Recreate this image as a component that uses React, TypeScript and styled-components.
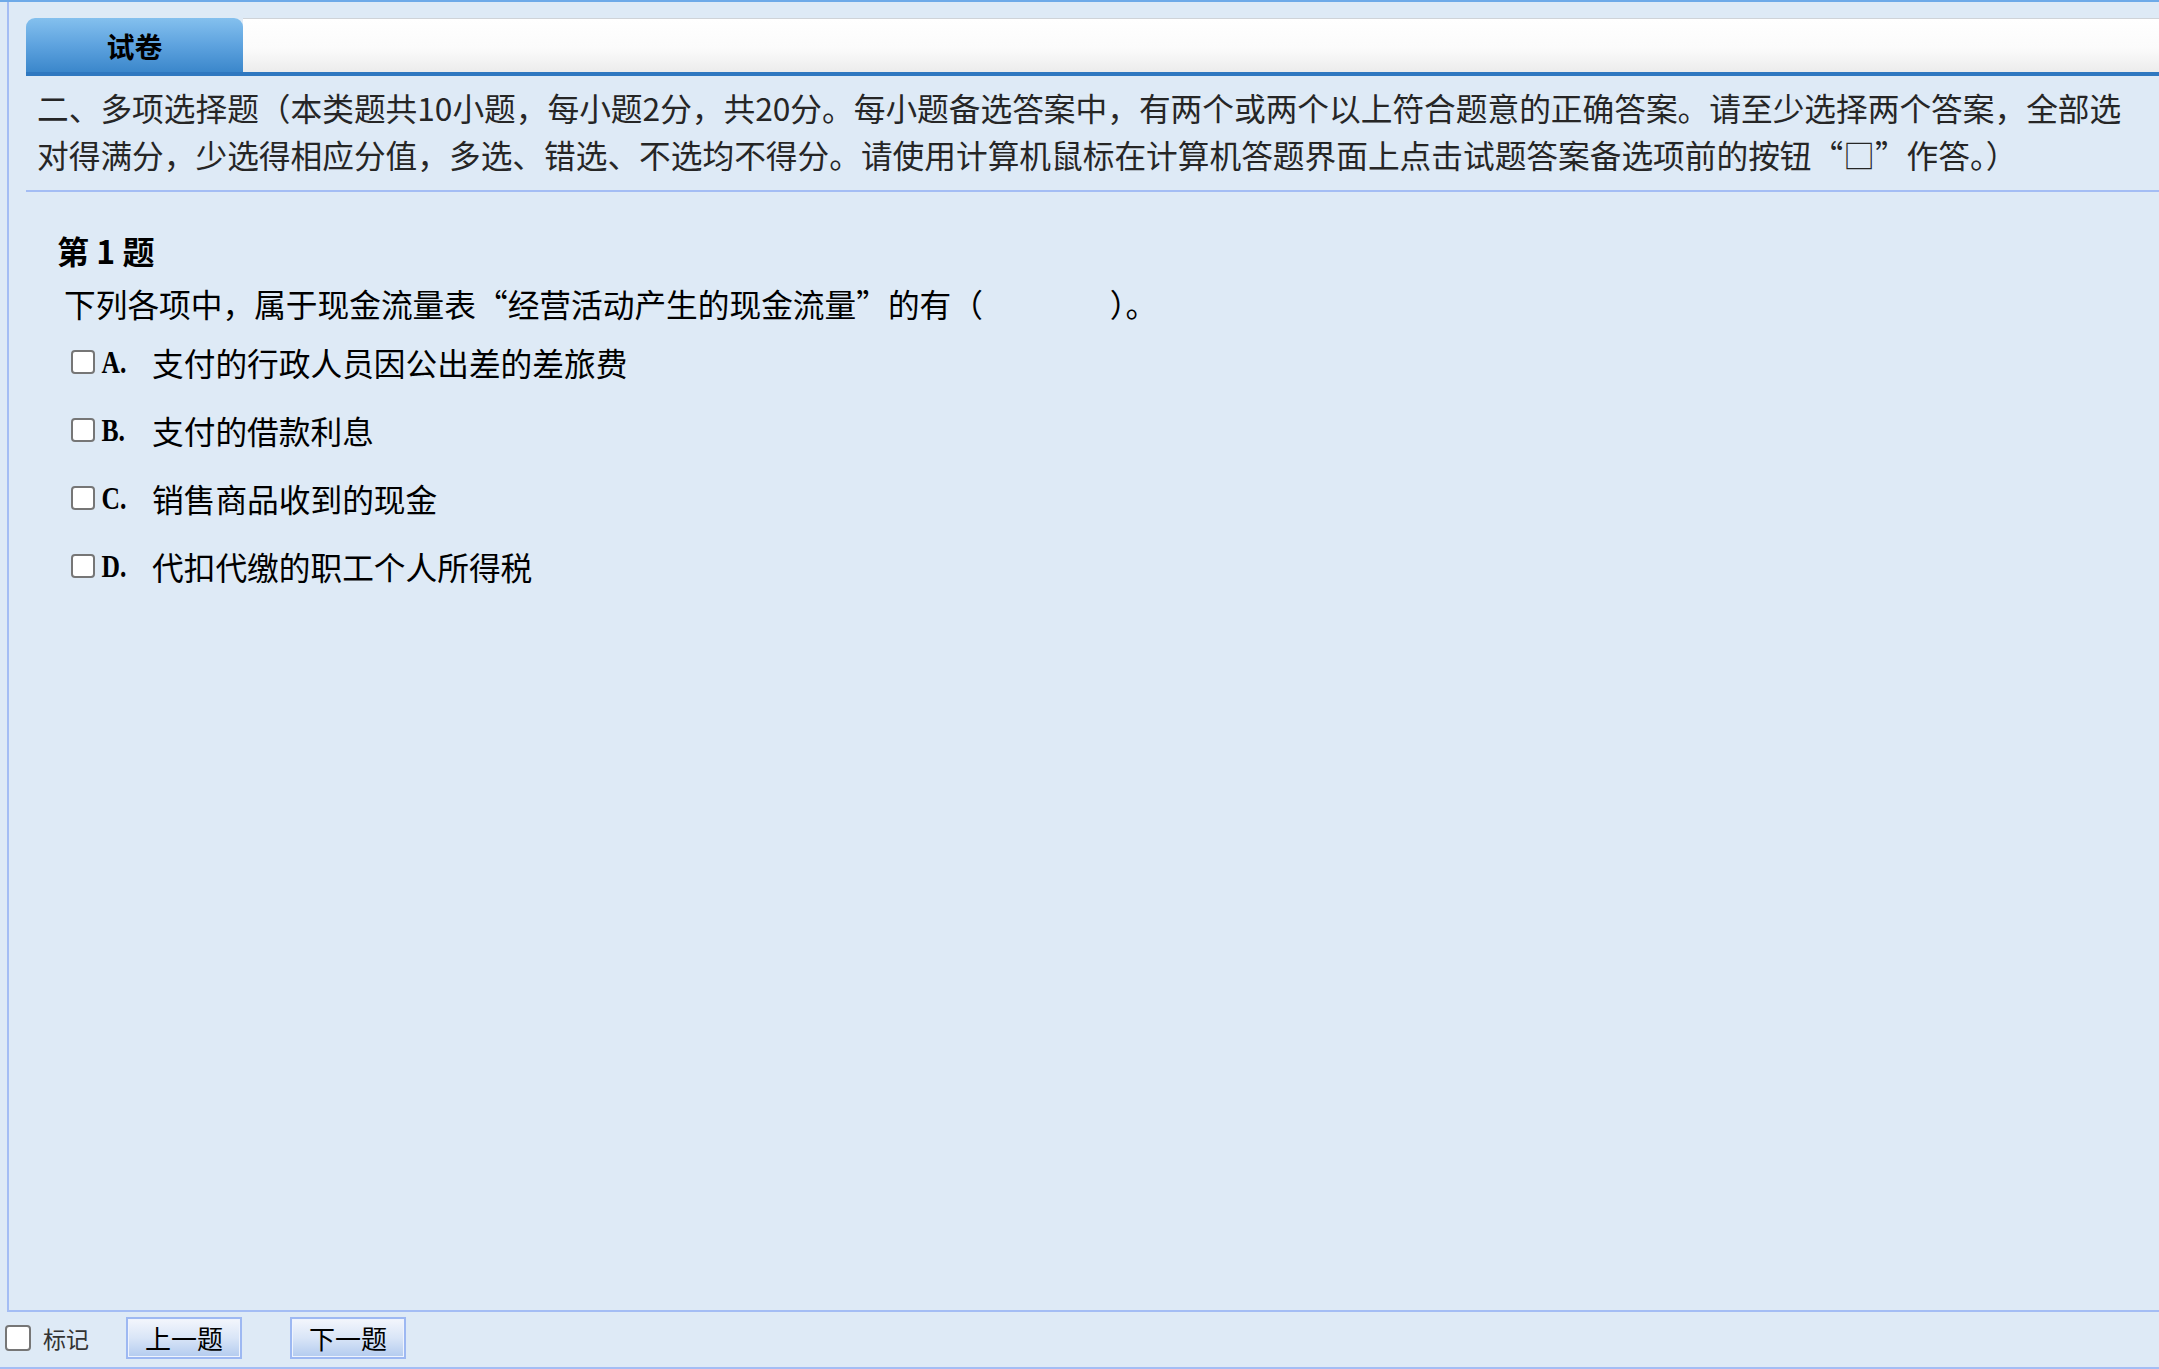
import styled, { createGlobalStyle } from "styled-components";

const GlobalStyle = createGlobalStyle`
  html, body {
    margin: 0;
    padding: 0;
    background: #deeaf6;
  }
  * {
    box-sizing: border-box;
  }
`;

const Page = styled.div`
  display: flex;
  flex-direction: column;
  height: 100vh;
  border-top: 2px solid #6eaae8;
  border-bottom: 2px solid #a4bdf4;
  background: #deeaf6;
  font-family: "Noto Sans CJK SC", "Noto Sans", sans-serif;
  color: #222;
  overflow: hidden;
`;

const Main = styled.main`
  flex: 1;
  display: flex;
  flex-direction: column;
  margin-left: 7px;
  padding: 16px 0 0 17px;
  border-left: 2px solid #a4bdf4;
  border-bottom: 2px solid #a4bdf4;
`;

const TabBar = styled.div`
  display: flex;
  height: 58px;
  border-bottom: 4px solid #2f78c0;
`;

const Tab = styled.div`
  width: 217px;
  display: flex;
  align-items: center;
  justify-content: center;
  padding-top: 2px;
  border-radius: 9px 9px 0 0;
  background: linear-gradient(to bottom, #84c0ee 0%, #5ea3df 50%, #3b87cb 100%);
  font-size: 28px;
  font-weight: 700;
  color: #000;
`;

const TabFiller = styled.div`
  flex: 1;
  border-top: 1px solid #cfd3d8;
  background: linear-gradient(to bottom, #ffffff 0%, #fbfbfb 55%, #ececec 100%);
`;

const Instructions = styled.p`
  margin: 0;
  padding: 8px 20px 12px 11px;
  font-size: 31.7px;
  line-height: 47px;
  color: #262626;
  border-bottom: 2px solid #a4bdf4;
`;

const Question = styled.section`
  display: flex;
  flex-direction: column;
  padding: 36px 0 0 31px;
`;

const QuestionTitle = styled.h2`
  margin: 0;
  font-size: 32px;
  line-height: 44px;
  font-weight: 700;
  color: #000;
`;

const QuestionText = styled.p`
  margin: 7px 0 0 7px;
  font-size: 31.7px;
  line-height: 48px;
  color: #000;
`;

const Options = styled.div`
  display: flex;
  flex-direction: column;
  margin: 1px 0 0 14px;
`;

const Option = styled.label`
  display: flex;
  align-items: center;
  height: 68px;
  font-size: 31.7px;
  color: #000;
`;

const Check = styled.input.attrs({ type: "checkbox" })<{ $size: number }>`
  appearance: none;
  width: ${(p) => p.$size}px;
  height: ${(p) => p.$size}px;
  margin: 0;
  flex-shrink: 0;
  border: 2px solid #767676;
  border-radius: 4px;
  background: #fff;
`;

const Letter = styled.span`
  display: inline-block;
  width: 57px;
  padding-left: 8px;
  font-family: "Liberation Serif", serif;
  font-size: 32px;
  font-weight: 700;
  transform: scaleX(0.8);
  transform-origin: left center;
`;

const Footer = styled.footer`
  display: flex;
  align-items: center;
  height: 55px;
  padding: 0 0 4px 5px;
`;

const MarkLabel = styled.span`
  margin-left: 12px;
  font-size: 23px;
  color: #333;
`;

const NavButton = styled.button<{ $gap: number }>`
  width: 116px;
  height: 42px;
  margin-left: ${(p) => p.$gap}px;
  padding: 0;
  border: 2px solid #9db8f2;
  box-shadow: inset 0 0 0 1px #eef3fd;
  background: linear-gradient(to bottom, #f3f6fc 0%, #d9e5f7 50%, #b3cbef 100%);
  font-family: "Noto Sans CJK SC", sans-serif;
  font-size: 26px;
  line-height: 38px;
  color: #000;
  cursor: pointer;
`;

const options = [
  { key: "A", text: "支付的行政人员因公出差的差旅费" },
  { key: "B", text: "支付的借款利息" },
  { key: "C", text: "销售商品收到的现金" },
  { key: "D", text: "代扣代缴的职工个人所得税" },
];

export default function App() {
  return (
    <>
      <GlobalStyle />
      <Page>
        <Main>
          <TabBar>
            <Tab>试卷</Tab>
            <TabFiller />
          </TabBar>
          <Instructions>
            二、多项选择题（本类题共10小题，每小题2分，共20分。每小题备选答案中，有两个或两个以上符合题意的正确答案。请至少选择两个答案，全部选对得满分，少选得相应分值，多选、错选、不选均不得分。请使用计算机鼠标在计算机答题界面上点击试题答案备选项前的按钮“□”作答。）
          </Instructions>
          <Question>
            <QuestionTitle>第 1 题</QuestionTitle>
            <QuestionText>
              下列各项中，属于现金流量表“经营活动产生的现金流量”的有（{"\u3000\u3000\u3000\u3000"}）。
            </QuestionText>
            <Options>
              {options.map((o) => (
                <Option key={o.key}>
                  <Check $size={24} />
                  <Letter>{o.key}.</Letter>
                  {o.text}
                </Option>
              ))}
            </Options>
          </Question>
        </Main>
        <Footer>
          <Check $size={26} />
          <MarkLabel>标记</MarkLabel>
          <NavButton $gap={37}>上一题</NavButton>
          <NavButton $gap={48}>下一题</NavButton>
        </Footer>
      </Page>
    </>
  );
}
